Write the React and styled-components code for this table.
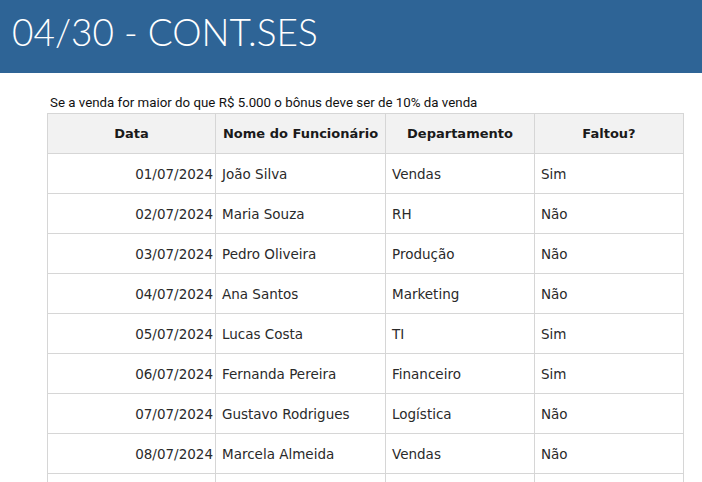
import React from "react";
import styled, { createGlobalStyle } from "styled-components";

const GlobalStyle = createGlobalStyle`
  body {
    margin: 0;
    background: #ffffff;
    font-family: "Lato", "DejaVu Sans", sans-serif;
  }
`;

const Banner = styled.header`
  height: 73px;
  background: #2e6496;
  display: flex;
  align-items: center;
  padding-left: 12px;
`;

const Title = styled.h1`
  margin: 0;
  color: #ffffff;
  font-family: "Lato", sans-serif;
  font-weight: 300;
  font-size: 37px;
  margin-top: -10px;
`;

const Content = styled.main`
  padding: 22px 0 0 47px;
`;

const Note = styled.p`
  margin: 0 0 2px 3px;
  font-family: "Roboto", sans-serif;
  font-size: 13.3px;
  line-height: 16px;
  color: #111111;
`;

const Table = styled.table`
  border-collapse: collapse;
  width: 637px;
  table-layout: fixed;
  font-family: "DejaVu Sans", sans-serif;
  font-size: 13.5px;
  color: #2a2a2a;
`;

const HeadCell = styled.th`
  height: 39px;
  background: #f2f2f2;
  border: 1px solid #d6d6d6;
  font-weight: 700;
  font-size: 13px;
  text-align: center;
  padding: 0;
  white-space: nowrap;
  color: #1a1a1a;
`;

const Cell = styled.td`
  height: 39px;
  border: 1px solid #d6d6d6;
  padding: 0 6px;
  text-align: ${(p) => (p.$right ? "right" : "left")};
  padding-right: ${(p) => (p.$right ? "2px" : "6px")};
  white-space: nowrap;
`;

const rows = [
  ["01/07/2024", "João Silva", "Vendas", "Sim"],
  ["02/07/2024", "Maria Souza", "RH", "Não"],
  ["03/07/2024", "Pedro Oliveira", "Produção", "Não"],
  ["04/07/2024", "Ana Santos", "Marketing", "Não"],
  ["05/07/2024", "Lucas Costa", "TI", "Sim"],
  ["06/07/2024", "Fernanda Pereira", "Financeiro", "Sim"],
  ["07/07/2024", "Gustavo Rodrigues", "Logística", "Não"],
  ["08/07/2024", "Marcela Almeida", "Vendas", "Não"],
  ["", "", "", ""],
];

export default function App() {
  return (
    <>
      <GlobalStyle />
      <Banner>
        <Title>04/30 - CONT.SES</Title>
      </Banner>
      <Content>
        <Note>Se a venda for maior do que R$ 5.000 o bônus deve ser de 10% da venda</Note>
        <Table>
          <colgroup>
            <col style={{ width: 168 }} />
            <col style={{ width: 170 }} />
            <col style={{ width: 149 }} />
            <col style={{ width: 149 }} />
          </colgroup>
          <thead>
            <tr>
              <HeadCell>Data</HeadCell>
              <HeadCell>Nome do Funcionário</HeadCell>
              <HeadCell>Departamento</HeadCell>
              <HeadCell>Faltou?</HeadCell>
            </tr>
          </thead>
          <tbody>
            {rows.map((r, i) => (
              <tr key={i}>
                <Cell $right>{r[0]}</Cell>
                <Cell>{r[1]}</Cell>
                <Cell>{r[2]}</Cell>
                <Cell>{r[3]}</Cell>
              </tr>
            ))}
          </tbody>
        </Table>
      </Content>
    </>
  );
}
